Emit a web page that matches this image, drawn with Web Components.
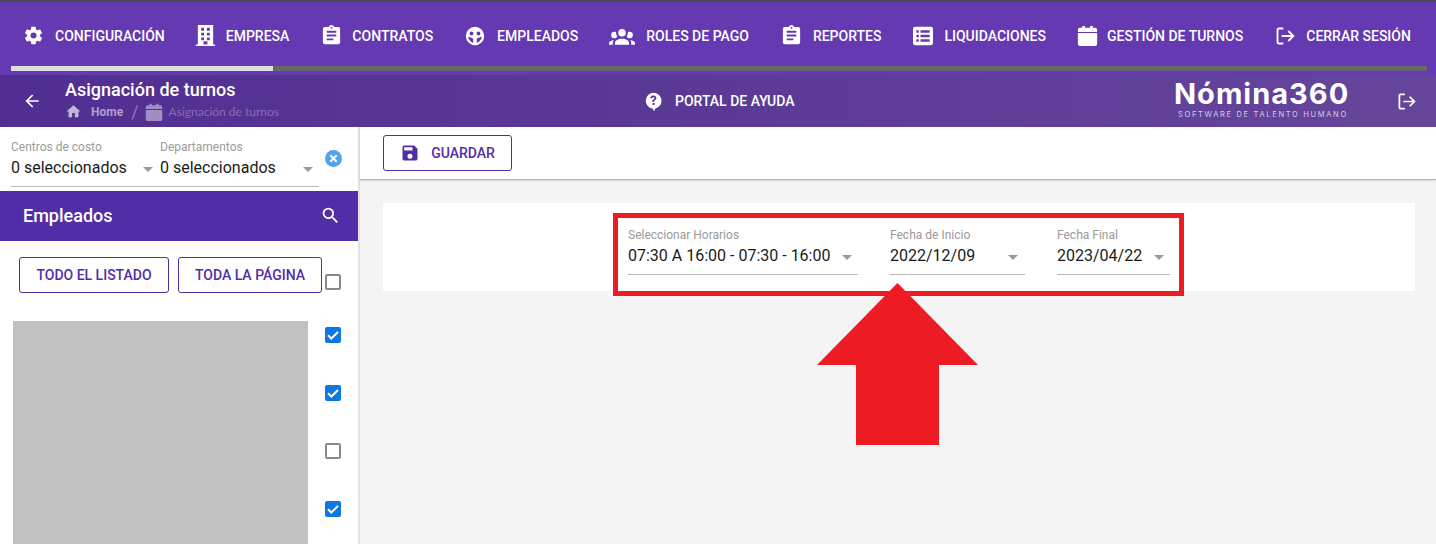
<!DOCTYPE html>
<html lang="es"><head><meta charset="utf-8"><title>Asignación de turnos</title>
<style>
html,body{margin:0;padding:0;height:544px;overflow:hidden;background:#f4f4f4;font-family:Roboto,"Liberation Sans",sans-serif}
body{position:relative;display:flex;flex-direction:column}
</style></head><body>
<script>
const I={
cog:'<path fill="currentColor" d="M12 15.5A3.5 3.5 0 0 1 8.5 12 3.5 3.5 0 0 1 12 8.5a3.5 3.5 0 0 1 3.5 3.5 3.5 3.5 0 0 1-3.5 3.5m7.43-2.53c.04-.32.07-.64.07-.97 0-.33-.03-.66-.07-1l2.11-1.63c.19-.15.24-.42.12-.64l-2-3.46c-.12-.22-.39-.31-.61-.22l-2.49 1c-.52-.39-1.06-.73-1.69-.98l-.37-2.65A.506.506 0 0 0 14 2h-4c-.25 0-.46.18-.5.42l-.37 2.65c-.63.25-1.17.59-1.69.98l-2.49-1c-.22-.09-.49 0-.61.22l-2 3.46c-.13.22-.07.49.12.64L4.57 11c-.04.34-.07.67-.07 1 0 .33.03.65.07.97l-2.11 1.66c-.19.15-.25.42-.12.64l2 3.46c.12.22.39.3.61.22l2.49-1.01c.52.4 1.06.74 1.69.99l.37 2.65c.04.24.25.42.5.42h4c.25 0 .46-.18.5-.42l.37-2.65c.63-.26 1.17-.59 1.69-.99l2.49 1.01c.22.08.49 0 .61-.22l2-3.46c.12-.22.07-.49-.12-.64l-2.11-1.66Z"/>',
building:'<path fill="currentColor" fill-rule="evenodd" d="M4 1h16v20.5h2V23H2v-1.5h2ZM7.5 4v3h3V4Zm6 0v3h3V4Zm-6 5v3h3V9Zm6 0v3h3V9Zm-6 5v3h3v-3Zm6 0v3h3v-3ZM10 18v3.5h4V18Z"/>',
clip:'<path fill="currentColor" d="M17 9H7V7h10m0 6H7v-2h10m-3 6H7v-2h7M12 3a1 1 0 0 1 1 1 1 1 0 0 1-1 1 1 1 0 0 1-1-1 1 1 0 0 1 1-1m7 0h-4.18C14.4 1.84 13.3 1 12 1c-1.3 0-2.4.84-2.82 2H5a2 2 0 0 0-2 2v14a2 2 0 0 0 2 2h14a2 2 0 0 0 2-2V5a2 2 0 0 0-2-2Z"/>',
face:'<path fill="currentColor" fill-rule="evenodd" d="M12 2a10 10 0 1 1 0 20 10 10 0 0 1 0-20ZM8.2 7.2a2.1 2.1 0 1 0 0 4.2 2.1 2.1 0 0 0 0-4.2Zm7.6 0a2.1 2.1 0 1 0 0 4.2 2.1 2.1 0 0 0 0-4.2ZM4.5 13.2c.5 3 2.6 5.4 5.6 6.3v-4.3c-1.800-1.300-3.600-2-5.600-2Zm15 0c-2 0-3.800.7-5.600 2v4.300c3-.9 5.100-3.300 5.600-6.300Z"/>',
users:'<path fill="currentColor" d="M12 5.500A3.500 3.500 0 0 1 15.500 9a3.500 3.500 0 0 1-3.500 3.500A3.500 3.500 0 0 1 8.500 9 3.500 3.500 0 0 1 12 5.500M5 8c.56 0 1.080.15 1.530.42-.15 1.430.27 2.850 1.130 3.960C7.160 13.340 6.160 14 5 14a3 3 0 0 1-3-3 3 3 0 0 1 3-3m14 0a3 3 0 0 1 3 3 3 3 0 0 1-3 3c-1.160 0-2.160-.66-2.660-1.620a5.536 5.536 0 0 0 1.130-3.960c.45-.27.97-.42 1.530-.42M5.500 18.250c0-2.070 2.910-3.750 6.500-3.750s6.500 1.680 6.500 3.750V20h-13v-1.750M0 20v-1.500c0-1.390 1.890-2.560 4.450-2.900-.59.68-.95 1.620-.95 2.650V20H0m24 0h-3.500v-1.750c0-1.030-.36-1.970-.95-2.650 2.560.34 4.450 1.510 4.450 2.900V20Z"/>',
list:'<path fill="currentColor" fill-rule="evenodd" d="M2.500 1h19A2.500 2.500 0 0 1 24 3.500v17a2.500 2.500 0 0 1-2.500 2.500h-19A2.500 2.500 0 0 1 0 20.500v-17A2.500 2.500 0 0 1 2.500 1ZM4 5.200v3h3v-3Zm5 0v3h11v-3ZM4 10.500v3h3v-3Zm5 0v3h11v-3ZM4 15.800v3h3v-3Zm5 0v3h11v-3Z"/>',
cal:'<path fill="currentColor" d="M6 1h3v2h6V1h3v2h2.500A2.500 2.500 0 0 1 23 5.500V8H1V5.500A2.500 2.500 0 0 1 3.500 3H6ZM1 9.200h22v12.300a2.500 2.500 0 0 1-2.500 2.500h-17A2.500 2.500 0 0 1 1 21.500Z"/>',
exit:'<g fill="none" stroke="currentColor" stroke-width="2.200"><path d="M10 3H4.500A1.500 1.500 0 0 0 3 4.500v15A1.500 1.500 0 0 0 4.500 21H10"/><path d="M8 12h14M16 6l6 6-6 6"/></g>',
back:'<path fill="currentColor" d="M20 11v2H8l5.500 5.500-1.420 1.420L4.160 12l7.920-7.920L13.500 5.500 8 11h12Z"/>',
home:'<path fill="currentColor" d="M10 20v-6h4v6h5v-8h3L12 3 2 12h3v8h5Z"/>',
help:'<path fill="currentColor" fill-rule="evenodd" d="M12 1a10 10 0 0 1 2.500 19.700L13 23.500c-.3.4-.8.4-1 0l-1.200-2.600A10 10 0 0 1 12 1Zm-.2 3.500c-2.300 0-3.800 1.400-3.900 3.500h2.500c.1-.8.600-1.300 1.400-1.300.8 0 1.300.5 1.300 1.100 0 .7-.4 1-1.100 1.500-1.100.8-1.500 1.600-1.500 3.200h2.300c0-1 .3-1.400 1.100-2 1-.7 1.700-1.500 1.700-2.900 0-1.900-1.500-3.100-3.600-3.100Zm-1 9.500v2.500h2.600V14Z"/>',
save:'<path fill="currentColor" d="M15 9H5V5h10m-3 14a3 3 0 0 1-3-3 3 3 0 0 1 3-3 3 3 0 0 1 3 3 3 3 0 0 1-3 3m5-16H5a2 2 0 0 0-2 2v14a2 2 0 0 0 2 2h14a2 2 0 0 0 2-2V7l-4-4Z"/>',
search:'<path fill="currentColor" d="M9.500 3A6.500 6.500 0 0 1 16 9.500c0 1.610-.59 3.090-1.560 4.230l.27.27h.79l5 5-1.500 1.500-5-5v-.79l-.27-.27A6.516 6.516 0 0 1 9.500 16 6.500 6.500 0 0 1 3 9.500 6.500 6.500 0 0 1 9.500 3m0 2C7 5 5 7 5 9.500S7 14 9.500 14 14 12 14 9.500 12 5 9.500 5Z"/>'
};
const svg=(n,w,h,s='')=>`<svg viewBox="0 0 24 24" width="${w}" height="${h}" preserveAspectRatio="xMidYMid meet" style="display:block;flex:none;${s}">${I[n]}</svg>`;
class B extends HTMLElement{constructor(){super();this.attachShadow({mode:'open'})}
 connectedCallback(){if(!this.shadowRoot.firstChild)this.shadowRoot.innerHTML=this.view()}}

customElements.define('nav-item',class extends B{view(){const a=n=>this.getAttribute(n);
 return `<style>:host{display:flex;align-items:center;color:#fff;font:500 14px/20px Roboto,sans-serif;white-space:nowrap;margin-left:var(--ml,0)}
 .i{width:${a('w')}px;display:flex;justify-content:center;margin-right:${a('g')}px}</style><span class="i">${svg(a('icon'),a('s'),a('s'))}</span><slot></slot>`}});

customElements.define('top-nav',class extends B{view(){return `<style>:host{display:block;flex:none;height:75px;box-sizing:border-box;background:#6539b2;border-top:2px solid #4a4a4a}
 .row{display:flex;align-items:center;padding:3px 0 0 24px;box-sizing:border-box;height:64px}
 .track{height:5px;margin:0 9px 0 11px;background:#676767}.fill{height:5px;width:262px;background:#dedede}</style>
 <div class="row"><slot></slot></div><div class="track"><div class="fill"></div></div>`}});

customElements.define('page-header',class extends B{view(){return `<style>:host{display:flex;flex:none;height:52px;align-items:center;color:#fff;background:linear-gradient(90deg,#512e92,#65469a)}
 .back{margin-left:22px;width:43px;flex:none}
 .tt{width:581px;flex:none;margin-top:-2px}
 h1{margin:0;font:500 18px/22px Roboto,sans-serif}
 .crumb{display:flex;align-items:center;height:20px;margin-top:1px;font-size:12px}
 .crumb b{font:700 12px Roboto,sans-serif;margin:0 8px 0 9px;color:rgba(255,255,255,.55)}
 .crumb i{font:400 18px Roboto,sans-serif;font-style:normal;margin-right:6px;color:rgba(255,255,255,.35)}
 .crumb span{font-family:Lato,sans-serif;margin-left:6px;color:rgba(255,255,255,.3)}
 .help{display:flex;align-items:center;width:528px;flex:none;font:500 14px Roboto,sans-serif;gap:12px}
 .help svg{margin-left:-2px}
 .logo{width:223px;flex:none;text-align:left;margin-top:-3px}
 .logo div{font:700 29px/28px Inter,sans-serif;letter-spacing:1px;white-space:nowrap}
 .logo small{display:block;font:400 7.500px/10px Inter,sans-serif;letter-spacing:1.680px;margin:2px 0 0 4px;color:#d6cde6;white-space:nowrap}
 </style>
 <span class="back">${svg('back',20,20)}</span>
 <div class="tt"><h1>Asignación de turnos</h1><div class="crumb">${svg('home',17,17,'opacity:.65')}<b>Home</b><i>/</i>${svg('cal',18,18,'opacity:.45')}<span>Asignación de turnos</span></div></div>
 <div class="help">${svg('help',19,19)}<span>PORTAL DE AYUDA</span></div>
 <div class="logo"><div>Nómina360</div><small>SOFTWARE DE TALENTO HUMANO</small></div>
 ${svg('exit',19,19)}`}});

customElements.define('select-field',class extends B{view(){const a=n=>this.getAttribute(n);
 return `<style>:host{display:block;width:${a('w')}px;flex:none;border-bottom:1px solid #b9b9b9;height:var(--h,47px);box-sizing:border-box}
 label{display:block;color:#9a9a9a;font:400 12px/14px Roboto,sans-serif}
 .v{display:flex;align-items:center;justify-content:space-between;color:#1a1a1a;font:400 16px/24px Roboto,sans-serif;margin-top:2px;padding-right:${a('pr')||6}px;white-space:nowrap}
 .c{width:0;height:0;border:5px solid transparent;border-top-color:#9a9a9a;border-bottom:0;margin-top:3px}</style>
 <label>${a('label')}</label><div class="v"><slot></slot><span class="c"></span></div>`}});

customElements.define('outline-btn',class extends B{view(){const a=n=>this.getAttribute(n);
 return `<style>:host{display:flex;align-items:center;justify-content:center;box-sizing:border-box;height:36px;width:${a('w')}px;flex:none;border:1px solid #512da8;border-radius:3px;color:#512da8;font:500 14px/20px Roboto,sans-serif;background:#fff;white-space:nowrap}</style><slot></slot>`}});

customElements.define('check-box',class extends B{view(){const c=this.hasAttribute('checked');
 return `<style>:host{display:block;width:16px;height:16px;flex:none;box-sizing:border-box;border-radius:2px;${c?'background:#0b78e3;':'border:2px solid #8a8a8a;background:#fff;'}}</style>
 ${c?'<svg viewBox="0 0 16 16" width="16" height="16" style="display:block"><path d="M3 8.300l3.300 3.200L13 5" fill="none" stroke="#fff" stroke-width="2"/></svg>':''}`}});

customElements.define('side-panel',class extends B{view(){return `<style>:host{display:flex;flex-direction:column;width:360px;flex:none;box-sizing:border-box;background:#fff;border-right:2px solid #e2e2e2;overflow:hidden}
 .f{display:flex;height:64px;flex:none;padding:13px 0 0 11px;box-sizing:border-box;--h:47px}
 .x{margin:10px 0 0 6px;flex:none}
 .h{height:50px;flex:none;background:#512da8;color:#fff;display:flex;align-items:center;justify-content:space-between;padding:0 17px 2px 23px;font:500 18px Roboto,sans-serif;box-sizing:border-box}
 .b{display:flex;height:80px;flex:none;padding:16px 0 0 19px;box-sizing:border-box}
 .b outline-btn+outline-btn{margin-left:9px}
 .b check-box{margin:17px 0 0 3px}
 .l{display:flex;flex:1;padding-left:13px}
 .g{width:295px;background:#c1c1c1;flex:none}
 .c{display:flex;flex-direction:column;gap:42px;padding:6px 0 0 17px}
 </style>
 <div class="f"><select-field w="149" pr="7" label="Centros de costo">0 seleccionados</select-field><select-field w="159" pr="6" label="Departamentos" >0 seleccionados</select-field>
 <svg class="x" viewBox="0 0 24 24" width="17" height="17"><circle cx="12" cy="12" r="12" fill="#4ea5ec"/><path d="M7.500 7.500l9 9M16.500 7.500l-9 9" stroke="#fff" stroke-width="2.800"/></svg></div>
 <div class="h"><span>Empleados</span>${svg('search',21,21)}</div>
 <div class="b"><outline-btn w="150">TODO EL LISTADO</outline-btn><outline-btn w="144">TODA LA PÁGINA</outline-btn><check-box></check-box></div>
 <div class="l"><div class="g"></div><div class="c"><check-box checked></check-box><check-box checked></check-box><check-box></check-box><check-box checked></check-box></div></div>`}});

customElements.define('main-panel',class extends B{view(){return `<style>:host{display:flex;flex-direction:column;flex:1;min-width:0;background:#f4f4f4}
 .t{height:53px;flex:none;box-sizing:border-box;background:#fff;border-bottom:1px solid #b5b5b5;box-shadow:0 1px 2px rgba(0,0,0,.12);padding:8px 0 0 23px}
 .t span{display:flex;align-items:center}
 .card{margin:23px 21px 0 23px;height:88px;flex:none;background:#fff;display:flex;justify-content:flex-start;padding:25px 0 0 245px;box-sizing:border-box;--h:47px}
 </style>
 <div class="t"><outline-btn w="129"><span>${svg('save',20,20,'margin-right:11px')}GUARDAR</span></outline-btn></div>
 <div class="card"><select-field w="230" pr="6" label="Seleccionar Horarios" style="margin-right:32px">07:30 A 16:00 - 07:30 - 16:00</select-field><select-field w="135" pr="7" label="Fecha de Inicio" style="margin-right:32px">2022/12/09</select-field><select-field w="113" pr="6" label="Fecha Final">2023/04/22</select-field></div>`}});

customElements.define('app-body',class extends B{view(){return `<style>:host{display:flex;flex:1;min-height:0}</style><slot></slot>`}});

customElements.define('red-callout',class extends B{view(){return `<style>:host{position:absolute;left:613px;top:213px;width:571px;height:234px;pointer-events:none}
 .r{position:absolute;left:0;top:0;width:571px;height:83px;box-sizing:border-box;border:5px solid #ed1c24}
 svg{position:absolute;left:204px;top:69px}</style>
 <div class="r"></div><svg width="162" height="164" viewBox="0 0 162 164"><path d="M80.500 1L161 83H122V163H39V83H0Z" fill="#ed1c24"/></svg>`}});
</script>
<top-nav>
 <nav-item icon="cog" w="18" s="21" g="13">CONFIGURACIÓN</nav-item>
 <nav-item icon="building" w="18" s="23" g="11" style="--ml:32px">EMPRESA</nav-item>
 <nav-item icon="clip" w="17" s="23" g="12" style="--ml:34px">CONTRATOS</nav-item>
 <nav-item icon="face" w="18" s="22" g="13" style="--ml:33px">EMPLEADOS</nav-item>
 <nav-item icon="users" w="26" s="26" g="11" style="--ml:31px">ROLES DE PAGO</nav-item>
 <nav-item icon="clip" w="17" s="23" g="13" style="--ml:34px">REPORTES</nav-item>
 <nav-item icon="list" w="20" s="20" g="11" style="--ml:32px">LIQUIDACIONES</nav-item>
 <nav-item icon="cal" w="18" s="21" g="11" style="--ml:32px">GESTIÓN DE TURNOS</nav-item>
 <nav-item icon="exit" w="18" s="20" g="12" style="--ml:33px">CERRAR SESIÓN</nav-item>
</top-nav>
<page-header></page-header>
<app-body><side-panel></side-panel><main-panel></main-panel></app-body>
<red-callout></red-callout>
</body></html>
